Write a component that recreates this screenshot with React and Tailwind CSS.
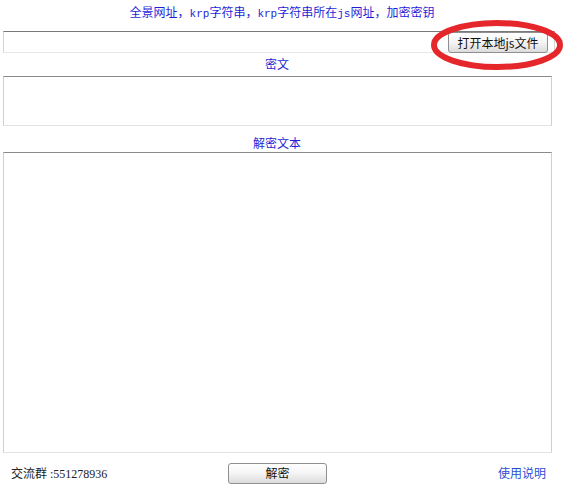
import React from 'react';

const cjk = "font-['Noto_Sans_CJK_SC',sans-serif]";
const Lat = ({ children }) => (
    <span className="font-['Liberation_Mono',monospace] text-[11px]">{children}</span>
);

const Btn = ({ children, className = '' }) => (
    <button
        className={`h-[21px] rounded-[3px] border border-[#8f8f8f] bg-gradient-to-b from-[#ffffff] via-[#f4f4f4] to-[#dcdcdc] text-[12px] leading-none text-[#111] ${cjk} ${className}`}
    >
        {children}
    </button>
);

const App = () => {
    return (
        <div className="relative w-[564px] h-[491px] bg-white overflow-hidden">
            {/* title */}
            <div className={`pt-[4px] h-[31px] text-center text-[12px] leading-[16px] text-[#1f1fd8] ${cjk}`}>
                全景网址，<Lat>krp</Lat>字符串，<Lat>krp</Lat>字符串所在<Lat>js</Lat>网址，加密密钥
            </div>

            {/* url input */}
            <div className="ml-[3px] w-[552px] h-[22px] flex items-center justify-end border border-[#d4d4d4] border-t-[#7a7a7a] border-b-[#e6e6e6] pr-[6px]">
                <Btn className="w-[100px] h-[20px] mt-[1px]">打开本地js文件</Btn>
            </div>

            {/* cipher */}
            <div className={`w-[554px] h-[23px] pt-[3px] text-center text-[12px] leading-[16px] text-[#1f1fd8] ${cjk}`}>
                密文
            </div>
            <div className="ml-[3px] w-[549px] h-[50px] border border-[#cfcfcf] border-t-[#8a8a8a] border-b-[#e3e3e3]"></div>

            <div className={`w-[554px] h-[26px] pt-[9px] text-center text-[12px] leading-[16px] text-[#1f1fd8] ${cjk}`}>
                解密文本
            </div>
            <div className="ml-[3px] w-[549px] h-[301px] border border-[#cfcfcf] border-t-[#8a8a8a] border-b-[#e3e3e3]"></div>

            {/* footer */}
            <div className="mt-[9px] flex items-center h-[22px] text-[12px]">
                <div className={`ml-[11px] w-[217px] text-[#222] leading-[16px] ${cjk}`}>
                    交流群<span className="font-['Liberation_Serif',serif]"> :551278936</span>
                </div>
                <Btn className="w-[99px]">解密</Btn>
                <a className={`ml-auto mr-[18px] text-[#2a4fd0] leading-[16px] ${cjk}`}>使用说明</a>
            </div>

            {/* red highlight annotation */}
            <svg className="absolute left-[430px] top-[19px]" width="134" height="52" viewBox="0 0 134 52">
                <ellipse cx="67" cy="26" rx="63" ry="22" fill="none" stroke="#e5262b" strokeWidth="6" />
            </svg>
        </div>
    );
};

export default App;
